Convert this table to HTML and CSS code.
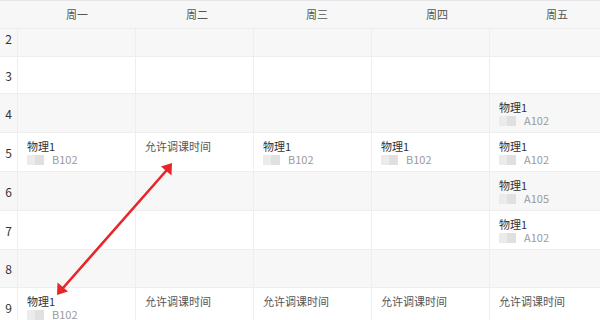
FILE: index.html
```html
<!DOCTYPE html>
<html lang="zh">
<head>
<meta charset="utf-8">
<link rel="stylesheet" href="styles.css">
</head>
<body>
<div class="sheet">
  <div class="head">
    <div class="hcell"></div>
    <div class="hcell">周一</div>
    <div class="hcell">周二</div>
    <div class="hcell">周三</div>
    <div class="hcell">周四</div>
    <div class="hcell">周五</div>
  </div>

  <div class="row gray r2">
    <div class="num">2</div><div class="cell"></div><div class="cell"></div><div class="cell"></div><div class="cell"></div><div class="cell"></div>
  </div>
  <div class="row r3">
    <div class="num">3</div><div class="cell"></div><div class="cell"></div><div class="cell"></div><div class="cell"></div><div class="cell"></div>
  </div>
  <div class="row gray r4">
    <div class="num">4</div><div class="cell"></div><div class="cell"></div><div class="cell"></div><div class="cell"></div>
    <div class="cell"><div class="title">物理1</div><div class="room"><span class="mask"></span>A102</div></div>
  </div>
  <div class="row r5">
    <div class="num">5</div>
    <div class="cell"><div class="title">物理1</div><div class="room"><span class="mask"></span>B102</div></div>
    <div class="cell"><div class="allow">允许调课时间</div></div>
    <div class="cell"><div class="title">物理1</div><div class="room"><span class="mask"></span>B102</div></div>
    <div class="cell"><div class="title">物理1</div><div class="room"><span class="mask"></span>B102</div></div>
    <div class="cell"><div class="title">物理1</div><div class="room"><span class="mask"></span>A102</div></div>
  </div>
  <div class="row gray r6">
    <div class="num">6</div><div class="cell"></div><div class="cell"></div><div class="cell"></div><div class="cell"></div>
    <div class="cell"><div class="title">物理1</div><div class="room"><span class="mask"></span>A105</div></div>
  </div>
  <div class="row r7">
    <div class="num">7</div><div class="cell"></div><div class="cell"></div><div class="cell"></div><div class="cell"></div>
    <div class="cell"><div class="title">物理1</div><div class="room"><span class="mask"></span>A102</div></div>
  </div>
  <div class="row gray r8">
    <div class="num">8</div><div class="cell"></div><div class="cell"></div><div class="cell"></div><div class="cell"></div><div class="cell"></div>
  </div>
  <div class="row r9">
    <div class="num">9</div>
    <div class="cell"><div class="title">物理1</div><div class="room"><span class="mask"></span>B102</div></div>
    <div class="cell"><div class="allow">允许调课时间</div></div>
    <div class="cell"><div class="allow">允许调课时间</div></div>
    <div class="cell"><div class="allow">允许调课时间</div></div>
    <div class="cell"><div class="allow">允许调课时间</div></div>
  </div>

  <svg class="arrow" width="600" height="320" viewBox="0 0 600 320" xmlns="http://www.w3.org/2000/svg">
    <line x1="166" y1="171" x2="63" y2="288" stroke="#e8262a" stroke-width="2.6" stroke-linecap="round"/>
    <polygon points="172,163 171.5,175.5 161,166.5" fill="#e8262a"/>
    <polygon points="57,295 57.5,282.5 68,291.5" fill="#e8262a"/>
  </svg>
</div>
</body>
</html>
```

FILE: styles.css
```css
* { box-sizing: border-box; }
html, body {
  margin: 0;
  padding: 0;
  background: #fff;
}
body {
  width: 600px;
  height: 320px;
  overflow: hidden;
  font-family: "Noto Sans CJK SC", "Microsoft YaHei", sans-serif;
  font-size: 11px;
  color: #333;
}
.sheet {
  position: relative;
  width: 620px;
}
.head {
  display: grid;
  grid-template-columns: 17px repeat(5, 120px);
  height: 29px;
  background: #f7f7f7;
  border-top: 1px solid #e6e6e6;
  border-bottom: 1px solid #ededed;
}
.hcell {
  display: flex;
  align-items: center;
  justify-content: center;
  color: #555;
  padding-bottom: 1px;
}
.row {
  display: grid;
  grid-template-columns: 17px repeat(5, 118px);
  border-bottom: 1px solid #eeeeee;
  background: #fff;
}
.row.gray { background: #f7f7f7; }
.r2 { height: 28px; }
.r3 { height: 37px; }
.r4 { height: 39px; }
.r5 { height: 39px; }
.r6 { height: 39px; }
.r7 { height: 39px; }
.r8 { height: 38px; }
.r9 { height: 40px; }
.r2 .num { padding-bottom: 8px; }
.num {
  display: flex;
  align-items: center;
  justify-content: center;
  color: #333;
  font-size: 12px;
}
.cell {
  border-left: 1px solid #eeeeee;
  padding: 7px 9px 0;
  line-height: 13px;
}
.title { color: #333; }
.allow { color: #555; }
.room {
  display: flex;
  align-items: center;
  color: #9a9a9a;
}
.mask {
  display: inline-block;
  width: 17px;
  height: 10px;
  margin-right: 8px;
  background: linear-gradient(90deg, #ebebeb 0 45%, #e0e0e0 45% 100%);
}
.arrow {
  position: absolute;
  left: 0;
  top: 0;
  pointer-events: none;
}
```
